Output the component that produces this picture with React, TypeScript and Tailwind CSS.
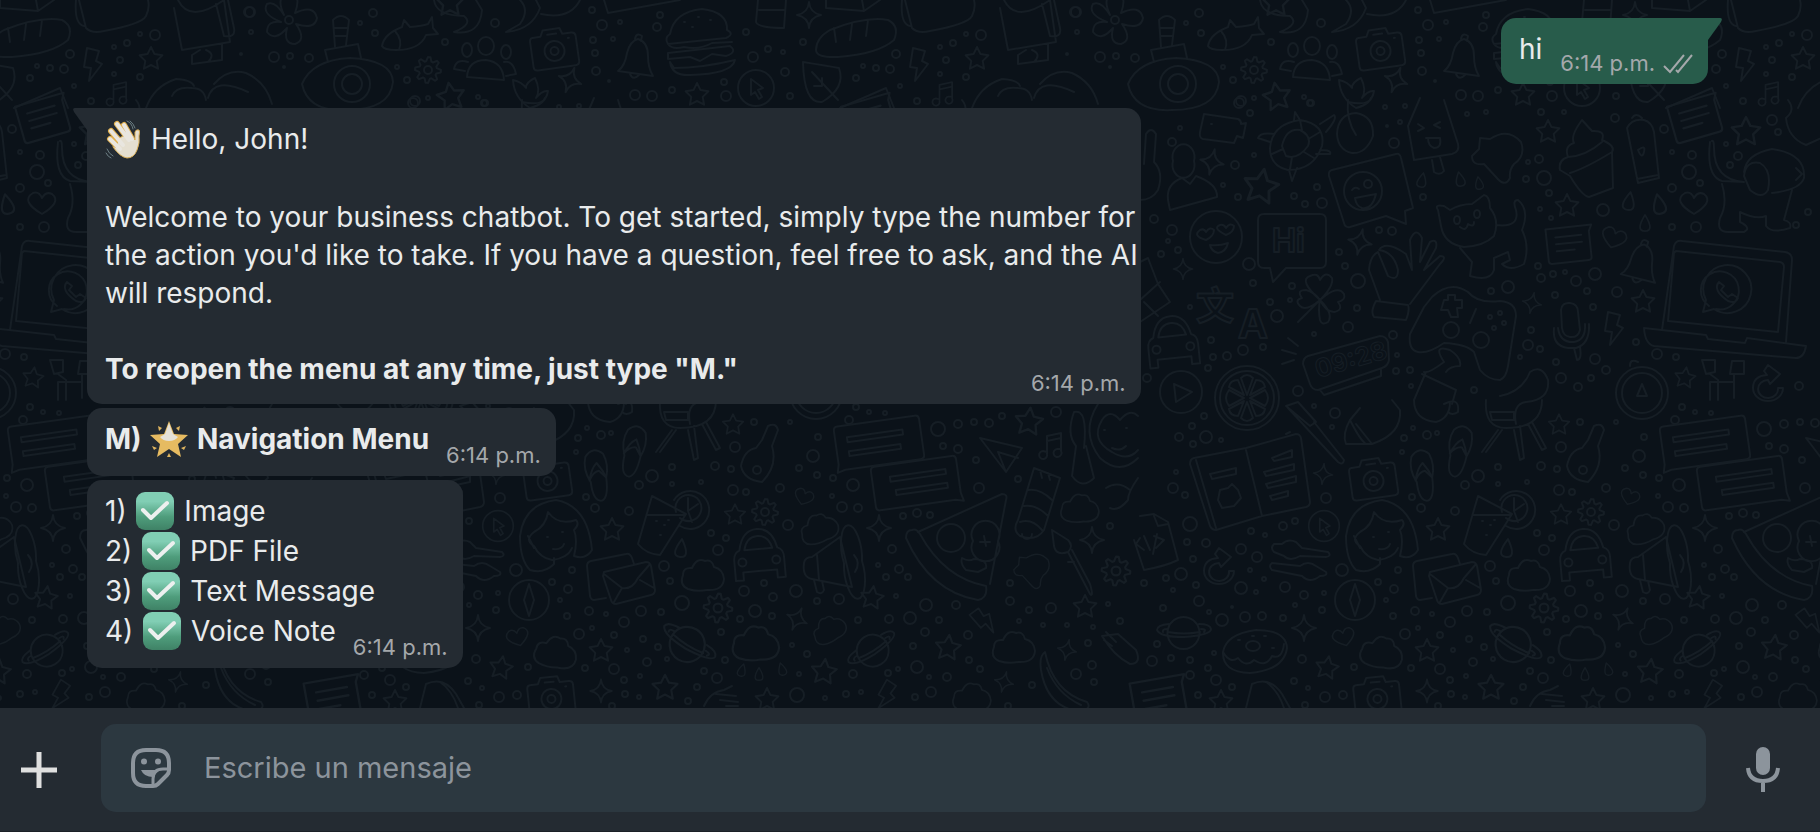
import React from 'react';

type Point = [number, number];
type Placed = [shape: string, x: number, y: number, scale?: number, rotate?: number];

const TILE_WIDTH = 826;

const polygon = (points: Point[]) => `M${points.map((p) => p.map((n) => n.toFixed(1)).join(' ')).join('L')}Z`;

const starPath = polygon(
  Array.from({ length: 10 }, (_, i): Point => {
    const r = i % 2 ? 6 : 12;
    const a = (Math.PI / 5) * i - Math.PI / 2;
    return [r * Math.cos(a), r * Math.sin(a)];
  }),
);

const gearPath = polygon(
  Array.from({ length: 32 }, (_, i): Point => {
    const r = i % 4 < 2 ? 13 : 9;
    const a = (Math.PI / 16) * i;
    return [r * Math.cos(a), r * Math.sin(a)];
  }),
);

const shapes: Record<string, string> = {
  star: starPath,
  gear: `${gearPath}M4 0A4 4 0 1 1-4 0A4 4 0 1 1 4 0`,
  spark: 'M0-13Q1-2 12 0Q1 2 0 13Q-1 2-12 0Q-1-2 0-13Z',
  cloud: 'M-15 14Q-24 10-20 0Q-20-8-11-7Q-6-18 2-14Q9-16 11-8Q20-6 21 4Q20 16 4 15Q-6 17-15 14Z',
  bolt: 'M-6-16L6-13L3-3L9 0L-4 17L-2 4L-9 3Z',
  drop: 'M0-9Q11 9 0 9Q-11 9 0-9Z',
  heart: 'M0 11Q-22-2-9-10Q-3-12 0-5Q4-12 10-9Q20-1 0 11Z',
  camera:
    'M-20-12L-12-12L-9-18L8-18L10-12L19-12Q23-12 23-8V17Q23 21 19 21H-19Q-23 21-23 17V-8Q-23-12-20-12ZM10 4A10 10 0 1 1-10 4A10 10 0 1 1 10 4M4 4A4 4 0 1 1-4 4A4 4 0 1 1 4 4M-5-13H4M15-7h1',
  note: 'M-22-16H24L21-10V16Q21 19 18 19H-19Q-22 19-22 16ZM-13-7H13M-13 0H13M-13 7H5',
  chat: 'M-38-22H40Q44-22 44-18V18Q44 22 40 22H-36L-44 24L-42 16V-18Q-42-22-38-22ZM-30-10H26V-5H-30ZM-30 4H22V9H-30Z',
  bell: 'M-17 13Q-10 8-8-5Q-5-17 3-19Q13-16 13-2Q13 10 18 18ZM-5 16Q-2 23 4 17M0-19Q1-26 7-22L6-17',
  car: 'M-25 22V2Q-25-6-19-8Q-15-28 0-28Q15-28 19-8Q25-6 25 2V22H17V14H-17V22ZM-14-8Q-11-21 0-21Q11-21 14-8ZM-13 4A4 4 0 1 1-21 4A4 4 0 1 1-13 4M21 4A4 4 0 1 1 13 4A4 4 0 1 1 21 4',
  planet: 'M15 0A16 16 0 1 1-16 0A16 16 0 0 1 15 0M-15-5Q-27-4-27 1Q-24 8 0 8Q27 6 27 0Q26-5 15-5M-17 0Q-22 0-21 3M17 0Q23 0 20 3M-16 3Q0 6 16 3',
  music: 'M-5 9V-9L9-12V6M-5-4L9-7M-5 9A4 4 0 1 1-9 6L-5 7M9 6A4 4 0 1 1 5 4L9 4',
  cursor: 'M18 0A18 18 0 1 1-18 0A18 18 0 1 1 18 0M-5-9L7 0L2 2L6 9L3 11L-1 4L-5 7Z',
  refresh: 'M-4-14L-1-10Q-15-9-15 3A15 13 0 0 0 15 3L10 3A10 9 0 1 1 0-5L2-1L12-11L0-20Z',
  citrus: 'M32 0A32 32 0 1 1-32 0A32 32 0 1 1 32 0M27 0A27 27 0 1 1-27 0A27 27 0 1 1 27 0M0-3L-6-20Q0-26 6-20ZM3 0L18-8Q24 0 18 8ZM0 4L-6 20Q0 26 6 20ZM-3 0L-18-8Q-24 0-18 8ZM3-3L9-18Q17-18 18-11ZM-3 3L-9 18Q-17 18-18 11ZM3 3L9 18Q17 18 18 11ZM-3-3L-9-18Q-17-18-18-11Z',
  leafblob: 'M-18-14L-8-13Q10-25 23-10Q28 4 16 12Q11 18 12 26Q7 36-2 25L-14 12Q-26 14-26 4L-19-3Z',
  flipflop: 'M-9-22Q0-32 9-22Q13-10 8 2Q7 22 0 24Q-9 24-8 4Q-14-10-9-22ZM-9 2Q-5-10 1-14Q6-6 8 2L2-6Q-4-6-9 2Z',
  banana: 'M-22-28Q-14 12 20 22Q26 30 10 31Q-20 26-26-10Q-28-24-22-28ZM-20-12Q-10 14 14 25',
  flower:
    'M-5-5Q-14-24 0-27Q13-26 6-7Q25-16 28-2Q26 10 7 4Q18 20 6 24Q-6 24-2 8Q-14 22-22 12Q-22 0-8 2Q-28-6-22-16Q-14-20-5-5ZM4 0A4 4 0 1 1-4 0A4 4 0 1 1 4 0',
  megaphone: 'M-30 0Q-32 14-22 16L18 24L6-26L-22-6Q-29-6-30 0ZM10 0A10 26 -8 1 0 28-2A10 26 -8 1 0 10 0M-17-8L-15 17M-20 17L-17 29Q-12 32-10 27L-12 18M20-8Q27 0 21 9',
};

const placed: Placed[] = [
  ['flower', 1115, 20], ['gear', 428, 70], ['camera', 554, 47, 1, -8], ['spark', 570, 80, 1, 20], ['bell', 635, 58],
  ['star', 697, 95], ['star', 451, 97, 1.2, -10], ['spark', 809, 15], ['bolt', 919, 64], ['star', 977, 59],
  ['cursor', 756, 88], ['music', 944, 93, 0.9], ['star', 450, 3, 1.2],
  ['star', 722, 132], ['star', 920, 132, 1.25], ['note', 869, 117, 1.1, -16], ['leafblob', 672, 152],
  ['spark', 386, 162, 1, 12], ['star', 435, 187, 1.5, 10], ['drop', 596, 180, 0.8, 12], ['drop', 634, 179, 0.8, -12],
  ['drop', 653, 183, 0.7, -10], ['star', 741, 206], ['drop', 803, 201, 1, 10], ['drop', 833, 204, 1.1, -12],
  ['drop', 819, 223, 0.9], ['heart', 868, 203, 1, 0], ['spark', 534, 242, 1, 12], ['note', 743, 243, 1, -6],
  ['heart', 788, 238, 0.9, 18], ['bell', 813, 263, 1, 6], ['spark', 357, 269, 0.8], ['spark', 706, 303, 0.8, 12],
  ['star', 817, 302], ['bolt', 788, 328], ['car', 347, 344, 1, -6], ['citrus', 421, 398], ['star', 859, 378, 0.9, 8],
  ['refresh', 942, 385], ['star', 733, 425, 0.9], ['chat', 878, 443, 1, -8], ['chat', 917, 483, -1, -8],
  ['spark', 497, 474, 0.8, 6], ['camera', 547, 477, 1, -8], ['flipflop', 598, 477, 1, -10], ['flipflop', 633, 453, 1, 10],
  ['cursor', 498, 526, 0.85], ['refresh', 393, 568], ['star', 612, 530], ['star', 735, 515, 0.9], ['gear', 765, 512],
  ['heart', 804, 497, 0.7, 20], ['cloud', 819, 528, 0.9, -20], ['spark', 879, 528], ['car', 759, 557, 1, -5],
  ['megaphone', 834, 563], ['drop', 681, 548, 1, 6], ['cloud', 703, 575], ['gear', 718, 608, 1.1], ['star', 872, 598, 1, 8],
  ['planet', 358, 629], ['planet', 690, 641, 1.1, 32], ['planet', 871, 647, 1, -32], ['spark', 478, 628],
  ['heart', 518, 637, 0.8, -16], ['cloud', 556, 652, 1, 10], ['cloud', 756, 643, 1.1], ['cloud', 829, 629, 0.8, -28],
  ['star', 601, 651], ['star', 501, 668, 1, 10], ['spark', 797, 619, 0.9, 24], ['drop', 742, 670, 0.7, 16],
  ['drop', 759, 674, 0.7], ['drop', 782, 669, 0.7, -16], ['star', 824, 672, 1.1, 6], ['star', 948, 648, 1.1, 6],
  ['bolt', 984, 620, 0.9, -50], ['note', 333, 698, 1.2, -10], ['star', 395, 702], ['camera', 551, 695, 1, -6],
  ['spark', 601, 691, 0.9], ['star', 665, 688, 1.1], ['star', 767, 700], ['bolt', 887, 695, 0.9, 20],
  ['cloud', 972, 697, 0.9], ['star', 1029, 422, 1.2, 6], ['music', 1052, 445], ['cloud', 1080, 508, 0.9],
  ['leafblob', 1032, 567, 0.7], ['spark', 1092, 540], ['gear', 1116, 571, 1.1], ['star', 1085, 607],
  ['cloud', 1014, 647], ['spark', 1067, 650, 0.8, 12], ['spark', 1004, 682, 0.8, 14], ['banana', 1067, 680],
];

// one-off drawings, already in tile coordinates
const drawings: string[] = [
  // diving toy
  'M302 84Q312 60 350 58Q392 60 393 82Q390 110 346 110Q308 112 302 84ZM370 84A18 18 0 1 1 334 84A18 18 0 1 1 370 84M362 84A10 10 0 1 1 342 84A10 10 0 1 1 362 84M328 62L325 50L358 44L361 58M335 47L333 20Q341 12 349 20L346 45M334 28H348M335 36H347',
  // fish
  'M382 46Q384 34 402 27L404 20L410 27Q422 26 428 24L432 17L433 28L438 34L426 35Q420 50 396 50Q384 50 382 46ZM395 31Q403 40 399 50',
  // people
  'M467 77Q468 60 486 60Q503 62 504 80ZM494 46A8 9 0 1 1 478 46A8 9 0 1 1 494 46M472 50A5 7 0 1 1 462 50A5 7 0 1 1 472 50M511 52A5 7 0 1 1 501 52A5 7 0 1 1 511 52M468 62Q456 58 454 69L465 71M504 62Q513 60 516 74L506 76',
  // tulip
  'M530 108Q514 98 513 80Q522 82 526 88Q526 82 535 78Q541 90 536 98Q542 90 548 91Q546 104 530 108Z',
  // burger
  'M670 34Q674 12 702 9Q728 12 727 30Q735 34 726 38L668 44Q664 38 670 34ZM668 44Q672 50 684 47Q700 50 712 43L732 42M668 53L730 46Q738 52 726 56L712 54L700 61L690 57L668 59ZM670 62L674 68Q702 68 735 60Q732 74 690 75Q672 76 670 62M684 22h1M698 17h1M710 20h1M692 27h1',
  // top edge shapes
  'M434 0Q436 16 464 16Q474 24 454 32Q480 36 482 10L476 0M520 0Q530 10 520 24L506 32Q532 30 540 8L536 0M541 14Q570 20 580 0M604 0L608 13L680 0',
  'M758 0L756 22Q758 28 784 28L786 0M759 10H784M826 0V8L864 11L880 0M864 11L862 0',
  'M905 0L912 28Q918 34 930 31Q968 24 972 16Q976 8 974 0M902 0Q900 24 910 26M1000 8L1008 50L1056 42L1050 0Q1016 24 1004 0M1042 4L1050 36Q1062 38 1060 28L1054 0M1026 50L1018 55V64L1048 60V44M1032 50Q1042 54 1034 62',
  // bread, leaf
  'M816 50Q816 38 830 30Q866 16 888 20Q900 26 894 40Q878 54 838 57Q816 58 816 50ZM836 42L834 28M850 40L852 24M866 36L868 20M803 62Q828 66 839 68Q846 88 822 102Q804 104 803 62ZM812 72L838 100M822 78V86H814',
  // wings
  'M972 108Q980 86 1002 79Q1018 80 1020 86M998 96Q1002 86 1018 88Q1030 88 1032 100M1040 84Q1054 68 1072 73Q1092 82 1098 104M1034 98Q1040 76 1074 92',
  'M840 108L886 88L894 108',
  // spoon
  'M318 164L320 134Q325 126 330 134L328 162Q338 172 332 190Q326 200 314 200',
  // video camera
  'M378 114L412 119Q415 120 415 124L420 123L417 138L411 136L408 143L377 139Q373 138 374 132ZM385 124h1',
  // turtle
  'M444 148Q446 124 474 120Q500 124 496 146Q488 170 462 170Q444 166 444 148ZM456 146Q460 128 474 130Q486 136 482 146Q472 160 460 156ZM474 120L476 130M494 132L484 138M488 158L478 152M464 169L466 157M446 154L457 149M494 124L508 115Q512 118 500 132M468 120L469 112L474 120M444 142L432 138Q434 132 448 134M494 150Q506 150 504 154L490 154M463 170L466 181L471 168',
  // cherry
  'M511 134Q512 114 530 113Q548 116 547 136Q540 154 526 153Q512 150 511 134ZM530 135Q520 120 522 100M522 102Q542 106 545 98',
  // popsicle
  'M582 126L588 160L626 154Q634 152 632 144L618 100M582 126L594 98M606 160L608 172Q614 176 618 171L614 157M592 124L598 128L592 131M614 122L608 125L614 128M600 138H614Q616 148 608 148Q602 146 602 138',
  // ice cream
  'M744 176L734 170Q732 160 742 157Q738 146 748 143Q744 136 756 120L766 131Q780 130 776 140Q790 146 786 152L787 188L763 197Q756 196 744 176ZM742 157Q760 156 776 142M744 173Q760 168 786 152',
  // bottle
  'M801 128Q806 118 818 120Q826 122 828 132L833 178L812 183ZM806 118Q810 112 816 118M811 179L832 175M812 150Q820 144 818 152Q816 160 812 150',
  // dog
  'M884 142Q880 176 896 181L918 182M886 141Q888 140 888 148Q888 180 918 182M918 172Q920 154 946 149Q980 154 978 178Q974 190 946 193M918 176Q920 160 934 163Q946 170 942 190Q936 200 924 190ZM896 184Q902 204 894 218Q890 232 902 232H918Q926 228 914 222V212Q930 220 940 216V226Q946 234 964 228Q966 222 958 220L966 190M970 168L976 174L970 180',
  'M962 100Q970 110 960 118Q962 138 980 145L1000 136',
  // person
  'M368 161A11 13 0 1 1 347 161A11 13 0 1 1 368 161M342 200Q340 184 356 178L364 184L370 176Q392 184 391 197L344 210Z',
  // winking message
  'M506 170L570 154Q574 153 575 158L587 208L579 211L580 224L560 216L524 227Q519 228 518 223L503 176Q502 171 506 170ZM556 191A19 19 0 1 1 518 191A19 19 0 1 1 556 191M526 190Q529 186 533 189M546 184A4 4 0 1 1 538 184A4 4 0 1 1 546 184M529 198L550 194Q546 210 536 208Q530 206 529 198',
  // cat
  'M612 210Q608 204 618 206L624 210Q634 204 646 204L658 195Q664 196 664 208Q674 220 668 236Q658 246 638 247Q618 244 615 226ZM670 225Q694 228 690 210Q686 200 692 200Q704 210 696 230Q704 246 698 264Q684 272 676 264L684 260L682 252L668 258V270Q664 282 644 276L646 262L634 248M634 220A3 4 0 1 1 628 220A3 4 0 1 1 634 220M654 214A3 4 0 1 1 648 214A3 4 0 1 1 654 214M634 227Q640 232 642 224Q648 228 648 222',
  // heart eyes
  'M416 237A26 26 0 1 1 364 237A26 26 0 1 1 416 237M380 240Q366 236 374 230Q378 228 380 232Q384 226 388 230Q388 236 380 240ZM400 235Q386 228 394 225Q398 224 400 228Q404 222 408 226Q408 232 400 235ZM384 245Q394 246 402 243Q400 252 392 253Q385 251 384 245Z',
  // speech bubble
  'M438 214H494Q500 214 500 220V262Q500 268 494 268H460L447 282L444 268H438Q432 268 432 262V220Q432 214 438 214Z',
  // hand
  'M554 300L543 270Q544 256 552 252L562 276Q572 282 572 270Q568 252 553 250Q560 240 580 254L586 270L584 240Q590 226 596 238L594 262L604 242Q612 238 610 248L598 270L614 256Q622 256 614 264L584 304M550 301L582 305Q584 310 580 320L548 317Q544 312 550 301Z',
  // torn box
  'M314 262L322 258L332 284L344 302L314 322M314 300L334 282M318 302L332 316',
  // clover
  'M494 300Q472 280 484 276Q492 272 494 280Q500 270 506 278Q508 286 494 300Q512 284 518 294Q520 300 512 302Q518 310 508 312Q500 312 494 300Q508 314 502 322Q496 326 494 320Q492 310 494 300Q480 312 474 306Q468 300 476 298Q470 290 480 290Q488 292 494 300ZM472 322L492 302',
  // laptop
  'M856 241L959 252Q966 253 966 260L960 342M856 241Q850 240 848 246L836 330M850 251L954 262Q958 263 958 267L952 332L842 321L848 253ZM818 328L880 335L882 339L919 343L921 338L980 346Q978 358 970 358L828 346Q819 344 818 328Z',
  'M877 312L880 300A24 24 0 1 1 888 309ZM883 306A19 19 0 1 1 890 309M893 282Q886 290 902 301Q910 304 912 298L906 294L902 297L895 290L898 286Z',
  // gamepad
  'M598 307L584 334Q582 350 592 352Q602 354 618 343Q640 344 648 352L654 370Q662 380 674 380Q680 378 682 366L690 316Q690 302 674 301Q652 304 642 292Q624 280 606 297ZM618 300H622V295H629V300H636V308H631L632 317H625L622 310H615ZM633 330A8 8 0 1 1 617 330A8 8 0 1 1 633 330M663 340A8 8 0 1 1 647 340A8 8 0 1 1 663 340M650 309L644 323',
  // microphone
  'M735 310Q736 302 744 303Q752 304 752 312L754 330Q752 338 744 337Q737 336 736 328ZM728 328Q726 346 742 348L750 348Q764 344 763 324M732 328Q734 343 748 342Q760 340 759 324M748 348L751 360Q756 360 754 347',
  // alarm clock
  'M482 356L554 336Q560 336 562 342L563 360Q562 366 556 368L492 390Q486 390 484 384L477 364Q477 358 482 356ZM494 390L498 395L555 376V370M462 338L472 346M456 350L470 354M456 364L468 360',
  // play
  'M376 392A21 21 0 1 1 334 392A21 21 0 1 1 376 392M348 384L366 392L350 402Z',
  // mascots on the shelf
  'M598 372Q602 374 618 362Q606 344 624 350Q636 358 634 366Q624 366 620 372M596 374L630 390M600 372L588 400M630 390L626 404M674 396Q696 392 704 372Q716 364 722 380Q724 400 700 402',
  'M842 393A26 26 0 1 1 790 393A26 26 0 1 1 842 393M836 393A20 20 0 1 1 796 393A20 20 0 1 1 836 393M816 384L821 396H811ZM804 366Q804 358 812 362',
  'M876 360L889 360V372L880 374ZM906 361H918V374H904ZM884 374L892 380V400M908 374V398M884 400V382H908',
  // tooth brush
  'M460 406L472 402L490 422L484 426ZM462 408L512 462Q517 466 518 460L488 422',
  // croissant
  'M524 420Q516 434 520 444L546 444Q576 434 574 410L566 400M530 424L546 444M534 408L524 420Q534 440 540 444',
  'M588 400Q588 420 610 422Q624 418 624 402M618 404Q634 396 632 412Q626 416 622 412',
  // barbecue
  'M660 400Q658 428 680 428Q716 428 716 400M664 412H688V420H666ZM690 424Q686 404 700 402M672 430L656 452M676 430L660 452M688 430L694 460L698 458L694 426M702 424L716 450L720 448L706 422',
  // guitar
  'M768 426Q776 422 778 430L772 446Q778 466 762 482Q744 480 741 466Q744 450 756 448L762 440ZM761 470A4 4 0 1 1 753 470A4 4 0 1 1 761 470',
  // book
  'M368 458L420 448L470 434Q474 434 475 438L484 502Q484 506 480 507L436 516L390 530Q386 530 384 526L364 464Q364 459 368 458ZM420 450L436 516M370 460L390 528M460 434L464 432M384 474L410 468V474L386 479ZM446 458L466 450V457L448 461ZM438 472L468 464V470L440 476ZM440 484L470 476V482L442 488ZM444 496L462 491V496L446 500ZM394 490L402 488L406 484L412 490L415 498L408 506L396 508L392 500Z',
  // lady
  'M520 536Q524 504 556 500Q588 506 592 550Q586 560 574 556Q578 540 574 530Q580 524 576 520Q558 526 548 512Q546 526 534 532Q524 540 534 546Q540 558 552 560Q568 558 572 548M534 548L528 536M520 536Q520 560 530 570Q544 574 554 564V558M547 537h1M562 532h1M553 549Q562 550 564 544',
  // source file
  'M314 516L328 514L342 522L352 560Q340 566 318 570L308 540M328 516L332 526L342 524M318 536L324 550M314 538L310 544L318 550M328 536L338 540L330 548M331 534L327 554',
  // wrenches
  'M448 544H456Q462 538 470 542L476 548L502 552Q506 556 500 557L474 556Q464 562 458 556L448 552Q444 548 448 544ZM446 563L474 566Q482 560 490 566L500 572Q502 576 494 576Q484 584 476 576L446 570Q442 566 446 563Z',
  // glass
  'M652 496L638 544Q646 554 660 555L686 514ZM647 515H684M674 500A19 19 0 1 1 680 526M676 512A13 13 0 1 1 680 518M688 511L698 504M688 511L692 522M688 511V498M656 521h1M664 525h1M668 520h1M660 535h1',
  // envelopes
  'M606 598L594 600Q591 600 590 596L587 566Q587 562 591 561L626 554Q630 553 632 558L634 564M604 572L646 562Q650 562 651 566L655 590Q655 594 651 595L616 604Q612 604 611 600L603 576ZM604 574L622 588Q632 590 638 578L650 564M614 602L622 588M640 580L654 588',
  // compass
  'M549 600A20 20 0 1 1 509 600A20 20 0 1 1 549 600M529 584L534 600L529 616L524 600Z',
  // pizza
  'M912 530Q906 530 906 538Q930 592 978 600Q988 598 986 586Q944 578 920 534Q916 528 912 530ZM918 532L1002 494Q1008 494 1006 500L990 584M965 538A14 14 0 1 1 937 538A14 14 0 1 1 965 538M998 541A14 14 0 1 1 973 541A14 14 0 1 1 998 541M962 558Q968 562 974 559Q988 560 986 568L978 572L966 570Q960 564 962 558ZM984 536L986 546M980 542H990',
  // donut
  'M397 652Q400 634 430 630Q460 630 461 648Q458 670 424 673Q396 672 397 652ZM397 652Q404 664 412 658Q420 668 428 660Q440 668 446 656Q456 660 458 644M434 646A7 5 0 1 1 420 646A7 5 0 1 1 434 646M412 640h2M438 636h2M446 648h2M426 636h2',
  'M420 708L426 684Q444 676 456 694L464 708M440 682Q452 690 458 708',
  'M704 706Q710 692 724 690L732 686M716 694L736 696M720 700L738 702M726 706H738',
  // paper plane, brushes, pencil
  'M980 438L1022 448L1006 472ZM1006 472L998 452L1018 458',
  'M1074 412Q1066 434 1076 446L1072 476Q1082 490 1094 478L1086 446M1074 412Q1088 408 1084 448',
  'M1034 468L1060 478L1044 530Q1036 542 1020 536Q1012 530 1018 520ZM1028 490Q1040 488 1052 500M1024 506Q1036 504 1048 516M1020 522Q1032 518 1042 530M1040 470L1042 478M1048 473L1050 480M1032 534A5 5 0 1 1 1022 534',
  'M1052 530L1068 540Q1074 546 1068 552Q1056 556 1054 546ZM1068 552L1090 594Q1094 598 1090 584L1072 550M1068 562L1074 562',
  'M1098 404Q1080 432 1100 458Q1120 476 1138 458M1102 420Q1110 408 1120 420Q1130 408 1138 416M1102 420Q1090 440 1112 452Q1128 462 1138 450M1104 430h1M1126 428h1M1112 448Q1120 452 1126 446',
  'M1102 636L1118 634L1136 650Q1142 664 1130 664Q1114 656 1102 636ZM1104 640L1112 646M1106 632L1116 642',
  'M1106 488Q1118 480 1130 490M1138 478Q1128 492 1128 500Q1118 512 1110 508',
];

const dots: [number, number, number][] = [
  [250, 12, 6], [251, 32, 3], [373, 13, 5], [360, 23, 3], [375, 33, 4], [274, 57, 6], [290, 56, 4], [309, 58, 5], [284, 67, 2],
  [592, 10, 4], [602, 25, 6], [620, 22, 3], [660, 15, 4], [657, 27, 5], [593, 40, 4], [613, 39, 3], [595, 53, 4], [596, 71, 5],
  [609, 81, 2], [635, 95, 6], [652, 96, 6], [672, 90, 4], [495, 23, 5], [445, 42, 4], [407, 80, 4], [397, 67, 3], [415, 101, 6],
  [428, 98, 3], [478, 97, 3], [485, 103, 4], [724, 82, 4], [726, 96, 6],
  [746, 32, 4], [768, 49, 4], [783, 52, 3], [753, 57, 6], [803, 42, 4], [785, 72, 5], [790, 96, 4], [896, 54, 5], [863, 66, 3],
  [876, 68, 4], [890, 69, 5], [856, 78, 4], [900, 86, 3], [917, 101, 4], [966, 34, 3], [981, 35, 6], [940, 47, 3], [953, 43, 4],
  [946, 60, 4], [940, 74, 3], [966, 77, 4], [1067, 54, 2], [1075, 12, 6],
  [413, 103, 6], [424, 113, 4], [484, 103, 4], [559, 107, 3], [579, 106, 3], [561, 126, 2], [574, 122, 3], [568, 143, 6], [346, 142, 5],
  [354, 128, 3], [409, 165, 5], [428, 155, 3], [397, 185, 3], [412, 197, 4], [468, 196, 4], [491, 187, 4], [496, 203, 6], [479, 204, 4],
  [641, 114, 3], [660, 112, 3], [715, 112, 4], [738, 112, 3], [789, 118, 5], [838, 129, 5], [846, 152, 3], [866, 155, 5], [863, 172, 8],
  [713, 159, 5], [702, 162, 3], [718, 178, 8], [700, 179, 4], [723, 193, 4], [714, 209, 3], [725, 218, 3], [777, 210, 7],
  [846, 188, 5], [874, 183, 4], [912, 156, 5], [900, 144, 3], [904, 165, 4], [946, 120, 6], [952, 132, 4], [970, 225, 4], [846, 227, 4],
  [870, 227, 6], [982, 212, 4], [328, 219, 5], [346, 230, 6], [342, 241, 3], [352, 250, 4], [335, 254, 4], [423, 264, 7], [427, 283, 4],
  [466, 286, 4], [513, 252, 4], [519, 266, 4], [532, 281, 8], [553, 230, 4], [566, 231, 5], [597, 197, 4], [712, 266, 4],
  [715, 278, 5], [727, 274, 4], [739, 272, 3], [750, 281, 6], [769, 274, 7], [682, 287, 7], [665, 291, 4], [729, 295, 4], [761, 291, 4],
  [791, 292, 6], [767, 307, 4], [364, 307, 3], [444, 302, 4], [451, 316, 7], [464, 300, 3], [522, 327, 6], [531, 308, 4], [488, 334, 3],
  [385, 340, 4], [417, 350, 6], [437, 347, 4], [387, 357, 4], [401, 356, 5], [382, 368, 4], [321, 378, 5], [567, 335, 5], [571, 355, 3],
  [570, 371, 4], [584, 370, 4], [585, 386, 3], [705, 330, 4], [702, 345, 6], [714, 349, 4], [694, 357, 3], [730, 362, 4],
  [769, 359, 6], [780, 370, 5], [735, 378, 6], [765, 378, 4], [752, 387, 5], [810, 342, 4], [831, 354, 6], [850, 357, 4], [973, 386, 5],
  [664, 317, 3], [674, 313, 3], [678, 323, 3], [668, 328, 3], [472, 391, 6], [648, 390, 4],
  [378, 416, 4], [366, 426, 4], [353, 437, 5], [380, 437, 7], [395, 440, 3], [367, 444, 4], [509, 413, 6], [488, 406, 3], [506, 427, 3],
  [587, 428, 3], [601, 435, 5], [611, 433, 3], [578, 438, 4], [576, 452, 3], [652, 476, 7], [639, 485, 5], [672, 467, 4], [672, 484, 3],
  [701, 482, 3], [586, 497, 4], [595, 508, 5], [629, 511, 5], [754, 422, 4], [735, 447, 6], [790, 422, 3], [818, 437, 4], [813, 456, 7],
  [799, 468, 4], [715, 466, 5], [731, 469, 4], [849, 420, 5], [856, 407, 4], [869, 412, 3], [885, 413, 3], [938, 429, 8], [958, 424, 5],
  [974, 422, 4], [989, 423, 5], [943, 446, 4], [958, 449, 5], [976, 460, 4], [817, 475, 4], [833, 478, 4], [853, 485, 7],
  [979, 488, 6], [733, 490, 6], [746, 492, 4], [780, 488, 5], [832, 496, 3], [842, 507, 6], [858, 508, 5], [903, 516, 4], [917, 513, 5],
  [930, 515, 4], [788, 525, 6], [711, 533, 4], [726, 538, 4], [718, 550, 6], [892, 549, 5], [347, 488, 6], [359, 495, 4], [350, 472, 3],
  [500, 498, 6], [364, 524, 8], [425, 531, 4], [439, 535, 3], [457, 526, 5], [469, 521, 4], [361, 542, 4], [380, 543, 5], [367, 559, 4],
  [415, 549, 6], [431, 557, 6], [424, 570, 3], [438, 579, 3], [355, 574, 7], [340, 578, 4], [318, 583, 4], [370, 585, 4], [347, 590, 3],
  [415, 588, 7], [430, 592, 3], [459, 587, 6], [478, 595, 5], [498, 593, 3], [373, 601, 6], [337, 608, 4], [383, 612, 3], [406, 607, 2],
  [469, 605, 3], [496, 610, 4], [516, 570, 7], [572, 570, 4], [552, 582, 4], [568, 589, 5], [560, 600, 3], [664, 566, 6], [670, 581, 4],
  [682, 603, 8], [661, 612, 4], [641, 611, 6], [589, 611, 5], [606, 614, 3], [567, 616, 4], [624, 622, 6], [579, 634, 6], [592, 628, 3],
  [744, 591, 6], [764, 583, 4], [773, 597, 5], [796, 591, 7], [817, 601, 4], [839, 599, 6], [755, 611, 7], [740, 619, 4], [772, 616, 4],
  [878, 565, 3], [899, 569, 5], [886, 577, 4], [908, 577, 4], [896, 596, 3], [926, 605, 7], [956, 605, 5], [858, 620, 4],
  [889, 619, 5], [910, 618, 7], [939, 620, 4], [925, 632, 5], [913, 646, 4], [396, 620, 7], [419, 617, 6], [436, 616, 5], [457, 618, 4],
  [331, 644, 4], [345, 658, 4], [326, 661, 6], [364, 660, 4], [382, 668, 4], [364, 675, 5], [390, 680, 6], [406, 687, 4], [388, 653, 3],
  [476, 659, 5], [528, 667, 4], [468, 681, 4], [482, 688, 3], [499, 697, 6], [517, 695, 5], [372, 695, 4], [479, 705, 4],
  [585, 668, 4], [614, 669, 6], [624, 680, 4], [647, 662, 5], [667, 659, 3], [643, 639, 4], [658, 647, 4], [627, 650, 3], [614, 635, 4],
  [721, 632, 4], [725, 660, 4], [792, 645, 3], [807, 654, 4], [717, 678, 6], [704, 671, 4], [697, 687, 4], [640, 676, 3], [625, 694, 4],
  [639, 697, 3], [688, 701, 4], [612, 706, 4], [799, 674, 3], [853, 674, 5], [888, 673, 4], [898, 669, 3], [917, 667, 7], [947, 677, 5],
  [929, 677, 3], [797, 695, 8], [825, 698, 3], [846, 694, 4], [861, 692, 3], [931, 692, 6], [915, 697, 4], [969, 660, 4], [980, 669, 4],
  [968, 635, 5], [1010, 583, 4], [1010, 601, 5], [1029, 610, 4], [1051, 608, 6], [1019, 621, 3], [1043, 625, 3], [1067, 625, 3],
  [1076, 674, 6], [1092, 665, 5], [1088, 643, 4], [1094, 682, 4], [1108, 604, 3], [1120, 621, 4], [1032, 685, 4], [1018, 479, 4],
  [1056, 412, 6], [1002, 416, 4], [1110, 526, 4], [1093, 627, 3], [1008, 706, 4],
];

const DoodleTile = () => (
  <>
    {placed.map(([shape, x, y, scale = 1, rotate = 0], i) => (
      <path key={i} d={shapes[shape]} transform={`translate(${x} ${y}) rotate(${rotate}) scale(${scale} ${Math.abs(scale)})`} />
    ))}
    {drawings.map((d, i) => (
      <path key={i} d={d} />
    ))}
    {dots.map(([x, y, r], i) => (
      <circle key={i} cx={x} cy={y} r={r - 1} />
    ))}
  </>
);

const Wallpaper = () => (
  <svg className="absolute inset-0 h-full w-full" aria-hidden="true">
    <g fill="none" stroke="#161e25" strokeWidth="2" strokeLinecap="round" strokeLinejoin="round">
      {[-1, 0, 1, 2].map((n) => (
        <g key={n} transform={`translate(${n * TILE_WIDTH} 0)`}>
          <DoodleTile />
        </g>
      ))}
      {/* lettering only shows in the tile that no bubble covers */}
      <g transform={`translate(${TILE_WIDTH} 0)`} fontFamily="Inter, sans-serif" fontWeight="700">
        <text x="446" y="252" fontSize="32">Hi</text>
        <text x="492" y="378" fontSize="25" strokeWidth="1" transform="rotate(-16 492 378)">09:28</text>
        <text x="412" y="338" fontSize="40">A</text>
        <text x="370" y="319" fontSize="38" fontFamily="Noto Sans CJK SC, sans-serif">文</text>
      </g>
    </g>
  </svg>
);

const WaveEmoji = () => (
  <svg role="img" aria-label="waving hand" viewBox="0 0 36 40" className="mr-0.5 inline-block h-10 w-9 align-top">
    <g strokeLinecap="round" strokeLinejoin="round" fill="none">
      <g stroke="#e0b050" strokeWidth="6">
        <path d="M6 11L18 25M12 4L24 20M5 19L15 29M19 5L27 19" />
      </g>
      <path d="M11 27L14 18L25 13L30 20V12Q31 9 34 10Q35 11 34 16Q35 23 32 30Q29 38 22 38Q15 37 8 27Z" fill="#e5dfd0" stroke="#d9ae55" />
      <g stroke="#e9e6df" strokeWidth="4">
        <path d="M6 11L18 25M12 4L24 20M5 19L15 29M19 5L27 19" />
      </g>
      <path d="M22 1Q27 3 28 9M25 1Q29 4 30 8M2 29Q4 34 8 36M1 33Q3 37 6 38" stroke="#6d8085" strokeWidth="1" />
    </g>
  </svg>
);

const StarEmoji = () => (
  <svg role="img" aria-label="glowing star" viewBox="0 0 38 38" className="mx-0.5 mb-1 inline-block size-[38px] align-middle">
    <path d="M19 1L24 14L38 15L28 24L31 37L19 29L7 37L10 24L0 15L14 14Z" fill="#e6bb61" />
    <path d="M19 3L23 14L28 17Q25 21 19 21Q13 21 10 17L15 14Z" fill="#e4e1d8" />
    <path d="M8 6L12 8L9 11ZM30 6L26 8L29 11ZM2 26L7 28L4 30ZM36 26L31 28L34 30ZM19 33L21 37H17Z" fill="#dfb55f" />
  </svg>
);

const CheckEmoji = () => (
  <svg role="img" aria-label="check mark" viewBox="0 0 38 38" className="mx-0.5 inline-block size-[38px] align-top">
    <defs>
      <linearGradient id="check-fill" x1="0" y1="0" x2="0" y2="1">
        <stop offset="0.25" stopColor="#81ceb4" />
        <stop offset="0.65" stopColor="#4f9d7c" />
        <stop offset="1" stopColor="#3f8266" />
      </linearGradient>
    </defs>
    <rect width="38" height="38" rx="9" fill="url(#check-fill)" />
    <path d="M7 18L15 26L31 11" fill="none" stroke="#edf0ef" strokeWidth="4" strokeLinecap="round" strokeLinejoin="round" />
  </svg>
);

const Ticks = () => (
  <svg viewBox="0 0 30 20" className="h-5 w-[30px]" role="img" aria-label="Delivered">
    <path d="M1 12L7 18L21 1M13 16L15 18L29 1" fill="none" stroke="currentColor" strokeWidth="2" />
  </svg>
);

const Time = ({ ticks = false }: { ticks?: boolean }) => (
  <span className="-mb-1.5 flex shrink-0 items-end gap-2 self-end text-[22px] leading-[22px] text-[#a4a8ab]">
    <time>6:14 p.m.</time>
    {ticks && <Ticks />}
  </span>
);

interface BubbleProps {
  children: React.ReactNode;
  outgoing?: boolean;
  tail?: boolean;
}

const Bubble = ({ children, outgoing = false, tail = false }: BubbleProps) => (
  <div
    className={`relative max-w-[65%] rounded-[15px] pt-3 pr-[15px] pb-4 pl-[18px] ${
      outgoing ? 'self-end bg-[#285c4b]' : 'self-start bg-[#242b32]'
    } ${tail ? (outgoing ? 'rounded-tr-none' : 'rounded-tl-none') : ''}`}
  >
    {tail && (
      <svg
        viewBox="0 0 14 22"
        aria-hidden="true"
        className={`absolute top-0 h-[22px] w-3.5 ${outgoing ? '-right-3.5 -scale-x-100 text-[#285c4b]' : '-left-3.5 text-[#242b32]'}`}
      >
        <path d="M14 0H2Q-1 0 1 4L14 22Z" fill="currentColor" />
      </svg>
    )}
    {children}
  </div>
);

const menuItems = ['Image', 'PDF File', 'Text Message', 'Voice Note'];

const App = () => {
  return (
    <div className="flex min-h-screen flex-col bg-[#0b1219] font-['Inter',sans-serif] text-[28px] leading-[38px] text-[#e9ebec]">
      <main className="relative flex-1 overflow-hidden">
        <Wallpaper />

        <div className="relative flex flex-col gap-1 pt-[18px] pr-28 pl-[87px]">
          <Bubble outgoing tail>
            <div className="flex gap-[18px]">
              <p>hi</p>
              <Time ticks />
            </div>
          </Bubble>

          <div className="mt-5 flex flex-col">
            <Bubble tail>
              <p className="h-10">
                <WaveEmoji /> Hello, John!
              </p>
              <p className="-mr-3 py-[38px]">
                Welcome to your business chatbot. To get started, simply type the number for the action you'd like to
                take. If you have a question, feel free to ask, and the AI will respond.
              </p>
              <div className="flex justify-between">
                <p className="font-bold">To reopen the menu at any time, just type "M."</p>
                <Time />
              </div>
            </Bubble>
          </div>

          <Bubble>
            <div className="flex h-10 gap-[17px]">
              <p className="font-bold">
                M) <StarEmoji /> Navigation Menu
              </p>
              <Time />
            </div>
          </Bubble>

          <Bubble>
            <ul>
              {menuItems.map((item, index) => (
                <li key={item} className="flex h-10 gap-[17px]">
                  <span>
                    {index + 1}) <CheckEmoji /> {item}
                  </span>
                  {index === menuItems.length - 1 && <Time />}
                </li>
              ))}
            </ul>
          </Bubble>
        </div>
      </main>

      <footer className="flex items-center border-b border-[#1b2026] bg-[#242b32] pt-4 pr-10 pb-[19px] pl-5">
        <button type="button" aria-label="Attach" className="mt-1 text-[#dfe0df]">
          <svg viewBox="0 0 38 38" className="size-[38px]">
            <path d="M19 1V37M1 19H37" stroke="currentColor" strokeWidth="5" />
          </svg>
        </button>

        <div className="ml-[43px] flex h-[88px] flex-1 items-center rounded-[15px] bg-[#2c3840] pr-6 pl-[30px]">
          <button type="button" aria-label="Stickers" className="text-[#8c949c]">
            <svg viewBox="0 0 40 40" className="size-10">
              <path
                d="M15 2H25Q38 2 38 15V22Q38 25 36 27L27 36Q25 38 22 38H15Q2 38 2 25V15Q2 2 15 2Z"
                fill="none"
                stroke="currentColor"
                strokeWidth="4"
              />
              <path d="M38 21H32Q22 21 22 31V38" fill="none" stroke="currentColor" strokeWidth="3" />
              <path d="M10 22H28L22 29Q13 29 10 22Z" fill="currentColor" />
              <circle cx="13" cy="13.500" r="3" fill="currentColor" />
              <circle cx="27" cy="13.500" r="3" fill="currentColor" />
            </svg>
          </button>
          <input
            type="text"
            aria-label="Escribe un mensaje"
            placeholder="Escribe un mensaje"
            className="ml-[33px] min-w-0 flex-1 bg-transparent text-[29px] leading-10 outline-none placeholder:text-[#8c949c]"
          />
        </div>

        <button type="button" aria-label="Record voice message" className="mt-1 ml-10 text-[#8c949c]">
          <svg viewBox="0 0 34 46" className="h-[46px] w-[34px]">
            <rect x="10" y="0" width="14" height="28" rx="7" fill="currentColor" />
            <path d="M2 21Q3 34 17 34Q31 34 32 21M17 34V45" fill="none" stroke="currentColor" strokeWidth="4" />
          </svg>
        </button>
      </footer>
    </div>
  );
};

export default App;
